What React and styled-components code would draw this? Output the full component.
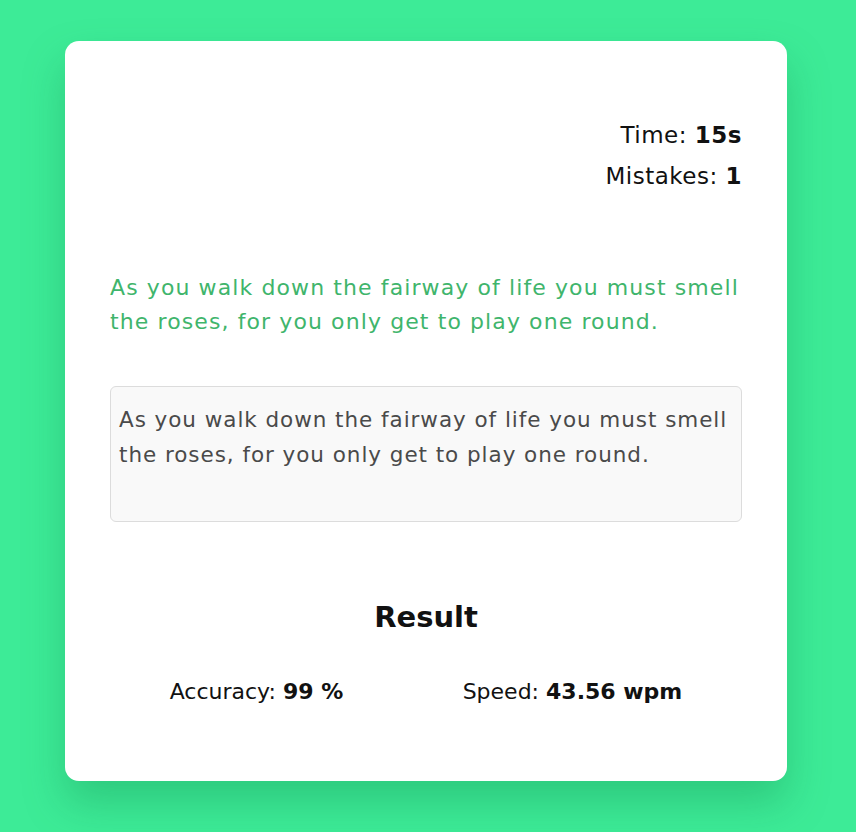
import React from 'react';
import styled, { createGlobalStyle } from 'styled-components';

const GlobalStyle = createGlobalStyle`
  html, body {
    margin: 0;
    padding: 0;
    background: #3deb97;
    font-family: "DejaVu Sans", "Open Sans", sans-serif;
  }
`;

const Page = styled.div`
  min-height: 832px;
  display: flex;
  padding: 41px 0 0 65px;
  box-sizing: border-box;
`;

const Card = styled.div`
  width: 722px;
  height: 740px;
  box-sizing: border-box;
  background: #fff;
  border-radius: 14px;
  padding: 74px 45px 45px;
  box-shadow: 0 22px 40px rgba(20, 140, 80, 0.35);
`;

const Stats = styled.div`
  text-align: right;
  font-size: 23px;
  line-height: 41px;
  letter-spacing: 0.5px;
  color: #111;
`;

const Strong = styled.b`
  font-weight: 700;
`;

const Quote = styled.p`
  margin: 74px 0 0;
  color: #3fb56c;
  font-size: 22px;
  line-height: 34px;
  letter-spacing: 1.1px;
`;

const Input = styled.textarea`
  display: block;
  width: 100%;
  height: 136px;
  margin-top: 47px;
  box-sizing: border-box;
  padding: 15px 8px 8px;
  background: #f9f9f9;
  border: 1px solid #dcdcdc;
  border-radius: 6px;
  font-family: inherit;
  font-size: 21.5px;
  line-height: 35px;
  letter-spacing: 0.95px;
  color: #4a4a4a;
  resize: none;
  outline: none;
`;

const Result = styled.h2`
  margin: 78px 0 0;
  text-align: center;
  font-size: 29px;
  font-weight: 700;
  color: #111;
`;

const ResultRow = styled.div`
  display: flex;
  justify-content: space-around;
  margin-top: 45px;
  font-size: 22px;
  color: #111;
`;

export default function App() {
  const text = 'As you walk down the fairway of life you must smell the roses, for you only get to play one round.';
  return (
    <>
      <GlobalStyle />
      <Page>
        <Card>
          <Stats>
            <div>Time: <Strong>15s</Strong></div>
            <div>Mistakes: <Strong>1</Strong></div>
          </Stats>
          <Quote>{text}</Quote>
          <Input defaultValue={text} />
          <Result>Result</Result>
          <ResultRow>
            <span>Accuracy: <Strong>99 %</Strong></span>
            <span>Speed: <Strong>43.56 wpm</Strong></span>
          </ResultRow>
        </Card>
      </Page>
    </>
  );
}
